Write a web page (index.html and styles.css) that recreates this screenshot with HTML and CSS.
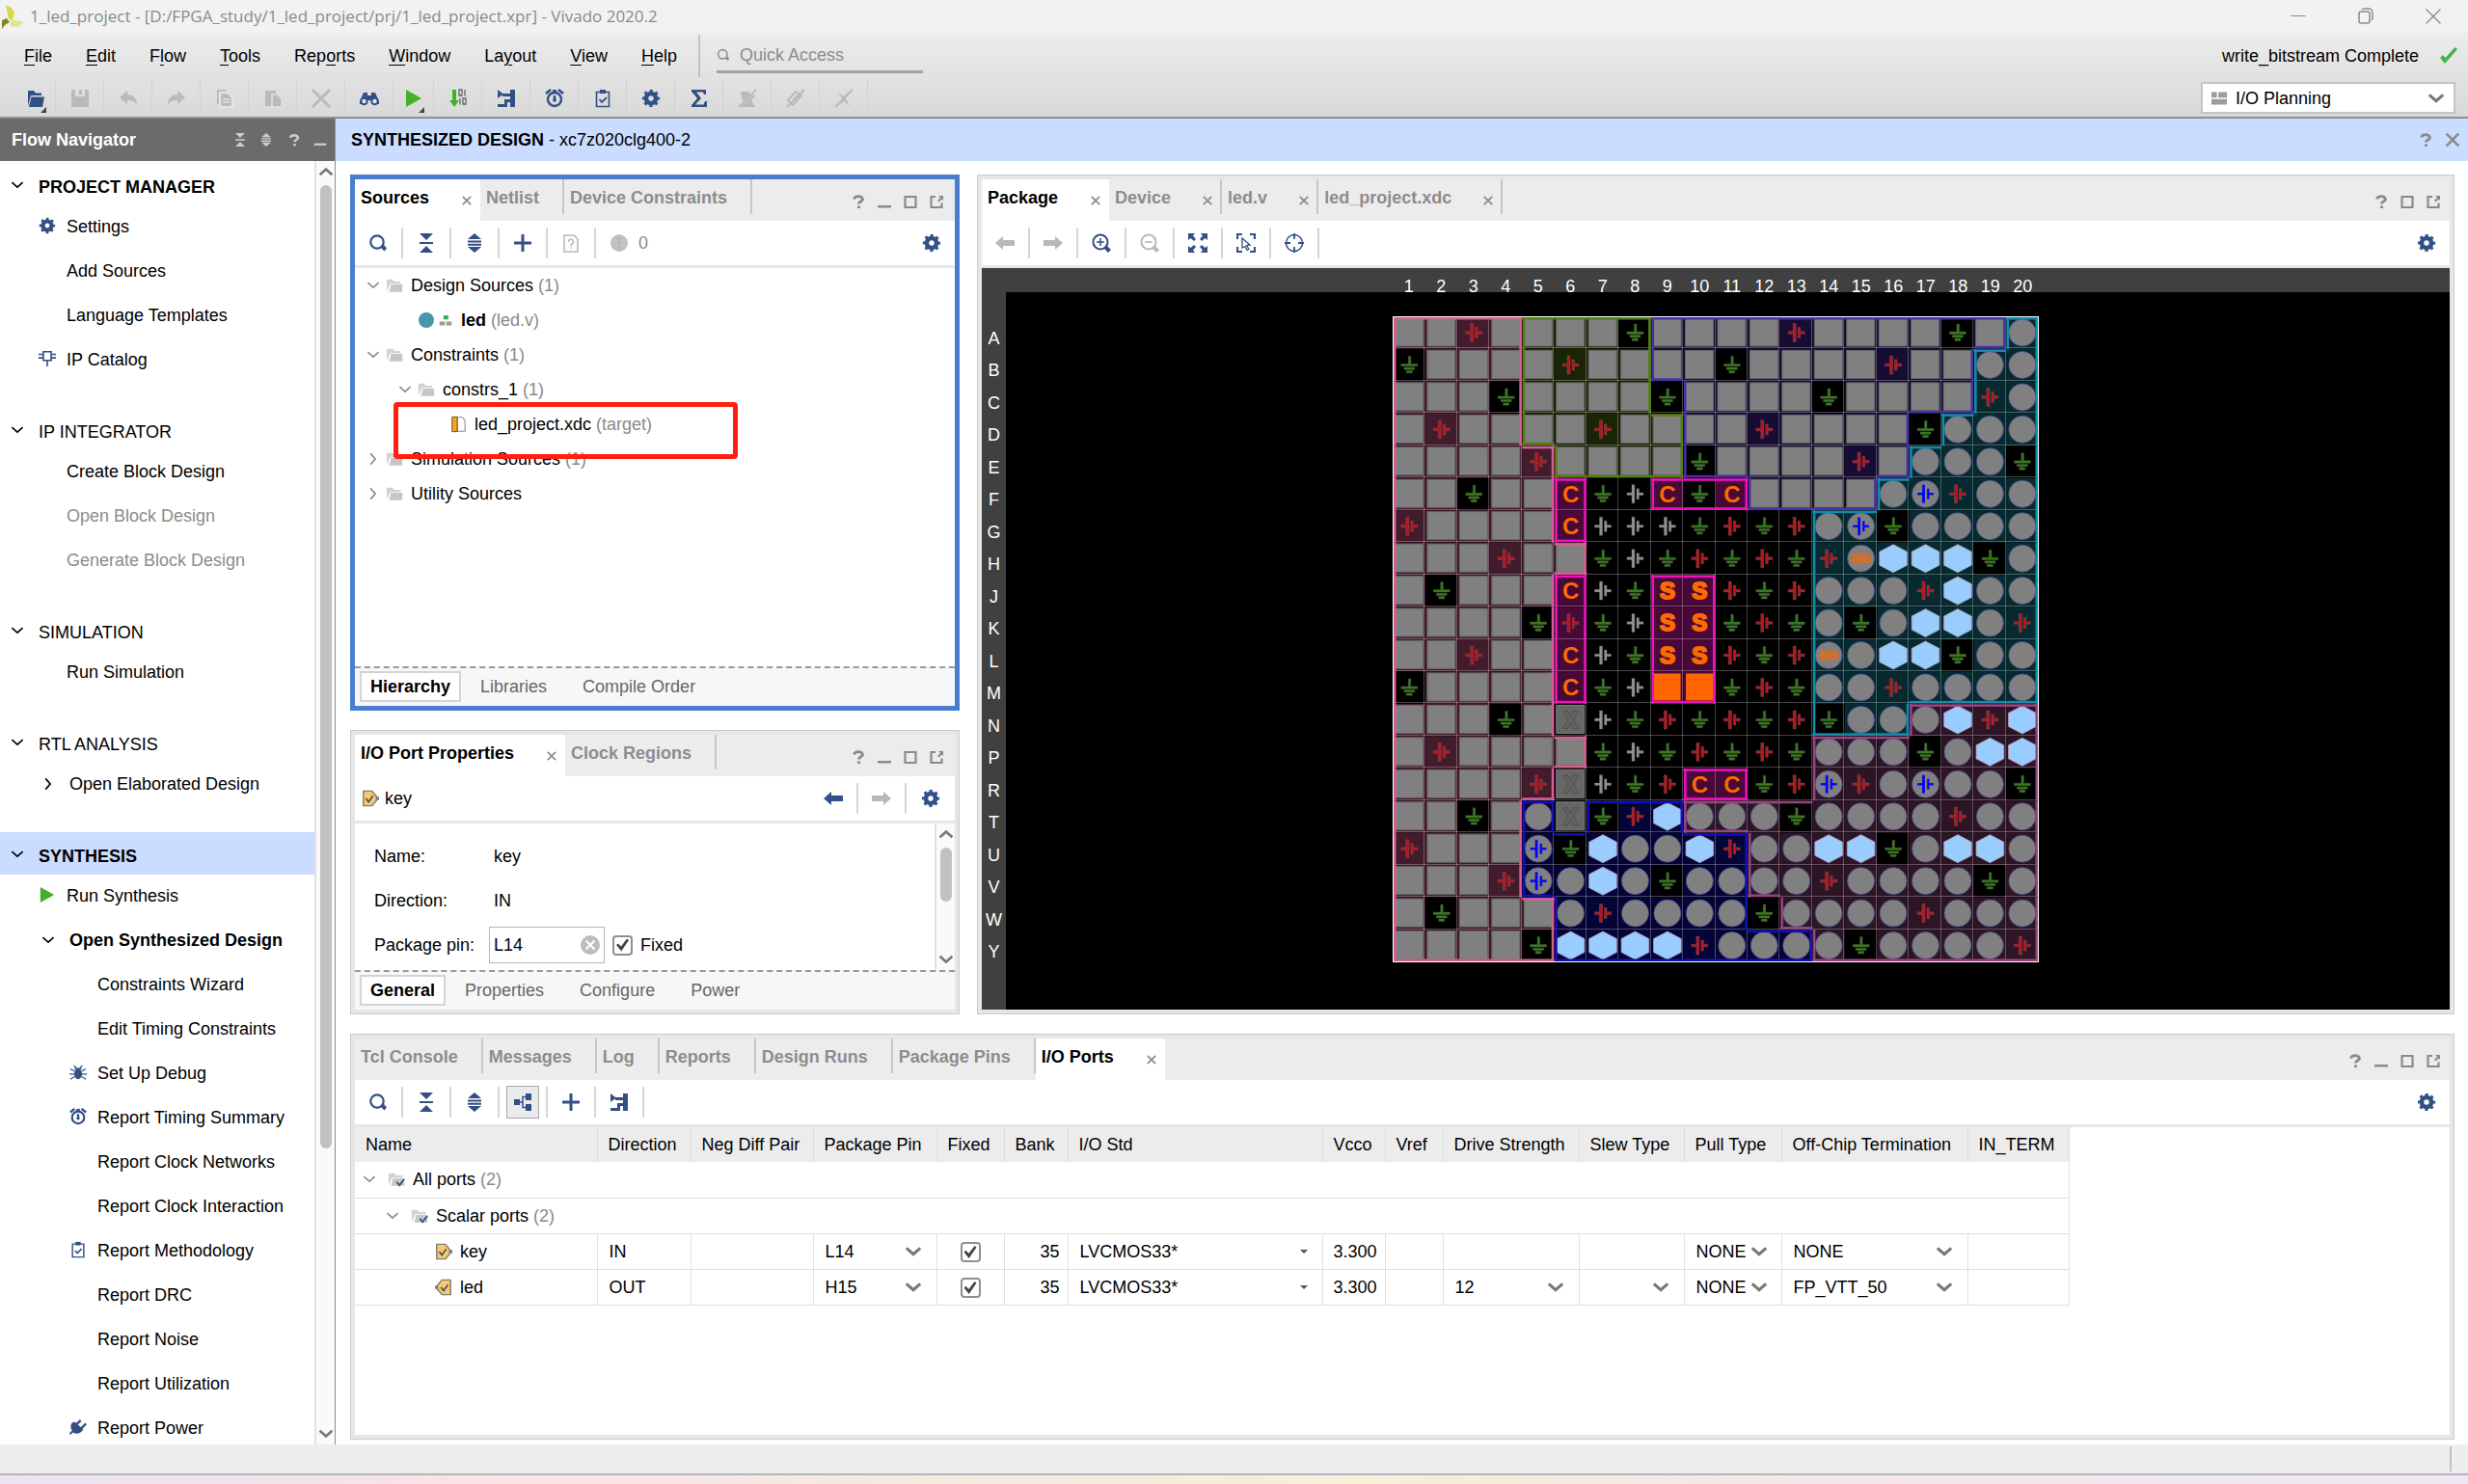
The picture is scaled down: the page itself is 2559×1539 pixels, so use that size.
FILE: index.html
```html
<!DOCTYPE html>
<html lang="en">
<head>
<meta charset="utf-8">
<title>1_led_project - Vivado 2020.2</title>
<link rel="stylesheet" href="styles.css">
</head>
<body>
<svg class="sprite" aria-hidden="true">
  <symbol id="gear" viewBox="0 0 20 20"><circle cx="10" cy="10" r="5" fill="none" stroke="currentColor" stroke-width="4.6"/><circle cx="10" cy="10" r="7.6" fill="none" stroke="currentColor" stroke-width="3" stroke-dasharray="2.98" stroke-dashoffset="1.5"/></symbol>
  <symbol id="search" viewBox="0 0 20 20"><circle cx="9" cy="9" r="6.7" fill="none" stroke="currentColor" stroke-width="2.2"/><path d="M13 15l3-3 3 3.500-2.500 3z" fill="currentColor"/></symbol>
  <symbol id="collapse" viewBox="0 0 20 20"><path d="M3 0h14l-7 7zM3 20h14l-7-7zM3 9h14v2H3z" fill="currentColor"/></symbol>
  <symbol id="expand" viewBox="0 0 20 20"><path d="M10 0l7 6H3zM10 20l7-6H3zM3 7.400h14v2H3zM3 10.800h14v2H3z" fill="currentColor"/></symbol>
  <symbol id="plus" viewBox="0 0 20 20"><path d="M8.500 1h3v7.500H19v3h-7.500V19h-3v-7.500H1v-3h7.500z" fill="currentColor"/></symbol>
  <symbol id="help" viewBox="0 0 20 20"><path d="M5.500 7.500a4.600 3.600 0 0 1 9 0c0 2.500-4.200 2.500-4.200 5" fill="none" stroke="currentColor" stroke-width="2.800"/><path d="M9 14.500h3V17H9z" fill="currentColor"/></symbol>
  <symbol id="mini" viewBox="0 0 20 20"><path d="M3 14h14v2.500H3z" fill="currentColor"/></symbol>
  <symbol id="maxi" viewBox="0 0 20 20"><path d="M4.500 5h11v11h-11z" fill="none" stroke="currentColor" stroke-width="2.200"/></symbol>
  <symbol id="float" viewBox="0 0 20 20"><path d="M9 5H4.500v11h11v-4.500" fill="none" stroke="currentColor" stroke-width="2.200"/><path d="M12 4h5v5l-1.500-1.500-3 3L11 9l3-3z" fill="currentColor"/></symbol>
  <symbol id="cross" viewBox="0 0 20 20"><path d="M3 3l14 14M17 3L3 17" fill="none" stroke="currentColor" stroke-width="2.800"/></symbol>
  <symbol id="down" viewBox="0 0 20 20"><path d="M2 6l8 7 8-7" fill="none" stroke="currentColor"/></symbol>
  <symbol id="right" viewBox="0 0 20 20"><path d="M6 2l7 8-7 8" fill="none" stroke="currentColor"/></symbol>
  <symbol id="folder" viewBox="0 0 20 20"><path d="M1 17V3h7l1.500 2.500H17V8H5z" fill="#d2d2d2"/><path d="M6 9h13v8.500H4z" fill="#c6c6c6"/></symbol>
  <symbol id="folderck" viewBox="0 0 20 20"><path d="M1 17V3h7l1.500 2.500H17V8H5z" fill="#d2d2d2"/><path d="M6 9h13v8.500H4z" fill="#c6c6c6"/><path d="M10.500 13l3 4 5.500-7" fill="none" stroke="#324f86" stroke-width="2"/></symbol>
  <symbol id="opendoc" viewBox="0 0 20 20"><path d="M2 18V2h6l2 2.500h6V7H5z" fill="currentColor"/><path d="M5.500 8.500H19L17 19H3z" fill="currentColor"/></symbol>
  <symbol id="save" viewBox="0 0 20 20"><path d="M1 1h4v7h10V1h4v18H1z" fill="currentColor"/><path d="M9 1h3v5H9z" fill="currentColor"/></symbol>
  <symbol id="undo" viewBox="0 0 20 20"><path d="M1 9l8-7v4c6 0 10 4 10 11-2-4-5-5-10-5v4z" fill="currentColor"/></symbol>
  <symbol id="redo" viewBox="0 0 20 20"><path d="M19 9l-8-7v4C5 6 1 10 1 17c2-4 5-5 10-5v4z" fill="currentColor"/></symbol>
  <symbol id="copy" viewBox="0 0 20 20"><path d="M2 1h9l2 2v13H2z" fill="currentColor"/><path d="M5 4h8l5 5v10H5z" fill="currentColor" stroke="#e4e4e4"/><path d="M8 11h7M8 14h7" stroke="#e4e4e4" stroke-width="1.500"/></symbol>
  <symbol id="paste" viewBox="0 0 20 20"><path d="M2 2h11v16H2z" fill="currentColor"/><path d="M9 6h6l4 4v9H9z" fill="currentColor" stroke="#e4e4e4" stroke-width="1.500"/></symbol>
  <symbol id="del" viewBox="0 0 20 20"><path d="M1 1l18 18M19 1L1 19" stroke="currentColor" stroke-width="3"/></symbol>
  <symbol id="binoc" viewBox="0 0 20 20"><path d="M4 4h4v3h4V4h4l4 9v3h-8v-4H8v4H0v-3z" fill="currentColor"/><circle cx="4.500" cy="13" r="3.200" fill="#e4e4e4" stroke="currentColor" stroke-width="2"/><circle cx="15.500" cy="13" r="3.200" fill="#e4e4e4" stroke="currentColor" stroke-width="2"/></symbol>
  <symbol id="play" viewBox="0 0 20 20"><path d="M2 1l16 9-16 9z" fill="#43b02a"/></symbol>
  <symbol id="bits" viewBox="0 0 20 20"><path d="M4 1h4v11h3l-5 7-5-7h3z" fill="#43b02a"/><path d="M11 1h3v6h-3zM17 1v6.500M12 10v6.500M15 10h3v6h-3z" fill="none" stroke="#666" stroke-width="1.300"/></symbol>
  <symbol id="route" viewBox="0 0 20 20"><path d="M1 1l6 4.500L1 10zM14 1h5v18h-5v-5h-3v5H1v-3h7v-5h6V8H6V5h8z" fill="currentColor"/></symbol>
  <symbol id="clock" viewBox="0 0 20 20"><circle cx="10" cy="11" r="7" fill="none" stroke="currentColor" stroke-width="2.400"/><path d="M1 5l5-4M14 1l5 4M10 7v5" stroke="currentColor" stroke-width="2.600"/><circle cx="10" cy="12" r="1.800" fill="currentColor"/><path d="M8 1h4v3H8z" fill="currentColor"/></symbol>
  <symbol id="clip" viewBox="0 0 20 20"><path d="M3.500 3.500h13v15h-13z" fill="none" stroke="currentColor" stroke-width="1.600"/><path d="M7 1h6v4H7z" fill="currentColor"/><path d="M6.500 11l2.500 3 5-5" fill="none" stroke="currentColor" stroke-width="1.800"/></symbol>
  <symbol id="sigma" viewBox="0 0 20 20"><path d="M2 1h15v5h-2l-1-2.500H7L12 10l-6 6.500h8.500L16 13h2v6H2v-2l6-7-6-7z" fill="currentColor"/></symbol>
  <symbol id="off1" viewBox="0 0 20 20"><path d="M3 3h8l2 4-6 6-3-3zM3 19l13-13 2 2-4 4 4 7z" fill="currentColor"/><path d="M1 19L19 1" stroke="currentColor" stroke-width="2"/></symbol>
  <symbol id="off2" viewBox="0 0 20 20"><path d="M2 12l8-9 6 4-9 10zM1 19L19 1M6 14l7-8" fill="none" stroke="currentColor" stroke-width="2"/></symbol>
  <symbol id="off3" viewBox="0 0 20 20"><path d="M3 2l6 6 8-6-5 8 4 8-6-5-7 5 5-8z" fill="currentColor"/><path d="M1 19L19 1" stroke="currentColor" stroke-width="2"/></symbol>
  <symbol id="ip" viewBox="0 0 20 20"><path d="M5.500 2h9v10h-9zM0 5h5M0 9h5M15 5h5M15 9h5M10 12v7" fill="none" stroke="currentColor" stroke-width="1.800"/></symbol>
  <symbol id="bug" viewBox="0 0 20 20"><path d="M6 5h8v2H6z" fill="currentColor"/><ellipse cx="10" cy="12" rx="4.500" ry="6" fill="currentColor"/><path d="M5 2l3 3M15 2l-3 3M1 6l5 3M19 6l-5 3M0 12h20M1 18l5-3M19 18l-5-3" stroke="currentColor" stroke-width="1.300"/></symbol>
  <symbol id="plug" viewBox="0 0 20 20"><path d="M3 5l3-1 9 8-1 3c-3 3-7 3-10 1L1 19l-1-2 3-3C1 11 1 8 3 5z" fill="currentColor"/><path d="M8 7l5-5M13 12l6-6M5 5l10 9" stroke="currentColor" stroke-width="2.600"/></symbol>
  <symbol id="query" viewBox="0 0 20 20"><path d="M3 2h10l4 4v13H3z" fill="none" stroke="currentColor" stroke-width="1.600"/><path d="M7.500 9a2.500 2.500 0 1 1 3.500 2c-.8.500-1 1-1 2M9.200 15h1.800" fill="none" stroke="currentColor" stroke-width="1.600"/></symbol>
  <symbol id="alert" viewBox="0 0 20 20"><circle cx="10" cy="10" r="9" fill="currentColor"/><path d="M10 4v7M10 13.500v2" stroke="#b0b0b0" stroke-width="1.800"/></symbol>
  <symbol id="hier" viewBox="0 0 20 20"><path d="M7 3h7v6H7z" fill="#2fae4e"/><path d="M1 12h8v6H1zM11 12h8v6h-8z" fill="#9b9b9b"/></symbol>
  <symbol id="xdc" viewBox="0 0 20 20"><path d="M9 2h6l3 4v12H9z" fill="#fff" stroke="#8c8c8c" stroke-width="1.200"/><path d="M3 1.500h6v17H3z" fill="#f5a623" stroke="#6b4a14" stroke-width="1"/></symbol>
  <symbol id="portin" viewBox="0 0 20 20"><path d="M2 1.500h10l5 6v5l-5 6H2z" fill="#fbc76a" stroke="#7d7d7d" stroke-width="1.600"/><path d="M17 8h3v4h-3z" fill="#7d7d7d"/><path d="M5 10l3 4 5-7" fill="none" stroke="#324f86" stroke-width="1.800"/></symbol>
  <symbol id="portout" viewBox="0 0 20 20"><path d="M18 1.500H8l-5 6v5l5 6h10z" fill="#fbc76a" stroke="#7d7d7d" stroke-width="1.600"/><path d="M0 8h3v4H0z" fill="#7d7d7d"/><path d="M7 10l3 4 5-7" fill="none" stroke="#324f86" stroke-width="1.800"/></symbol>
  <symbol id="left" viewBox="0 0 20 20"><path d="M0 10l8-7v4h12v6H8v4z" fill="currentColor"/></symbol>
  <symbol id="fwd" viewBox="0 0 20 20"><path d="M20 10l-8-7v4H0v6h12v4z" fill="currentColor"/></symbol>
  <symbol id="zin" viewBox="0 0 20 20"><circle cx="9" cy="9" r="7.500" fill="none" stroke="currentColor" stroke-width="2"/><path d="M5 9h8M9 5v8" stroke="currentColor" stroke-width="1.600"/><path d="M14.500 14.500l4 4" stroke="currentColor" stroke-width="4"/></symbol>
  <symbol id="zout" viewBox="0 0 20 20"><circle cx="9" cy="9" r="7.500" fill="none" stroke="currentColor" stroke-width="2"/><path d="M5 9h8" stroke="currentColor" stroke-width="1.600"/><path d="M14.500 14.500l4 4" stroke="currentColor" stroke-width="4"/></symbol>
  <symbol id="fit" viewBox="0 0 20 20"><path d="M0 0h7L5 2.500 8 6 6 8 2.500 5 0 7zM20 0v7l-2.500-2L14 8l-2-2 3-3.500L13 0zM0 20v-7l2.500 2L6 12l2 2-3 3.500L7 20zM20 20h-7l2-2.500L12 14l2-2 3.500 3 2.500-2z" fill="currentColor"/></symbol>
  <symbol id="sel" viewBox="0 0 20 20"><path d="M1 6V1h5M14 1h5v5M19 14v5h-5M6 19H1v-5" fill="none" stroke="currentColor" stroke-width="2.200"/><path d="M6 5l8 7-3.500.5 2.500 4-2 1-2-4L6 15z" fill="none" stroke="currentColor" stroke-width="1.300"/></symbol>
  <symbol id="target" viewBox="0 0 20 20"><circle cx="10" cy="10" r="8.500" fill="none" stroke="currentColor" stroke-width="1.500"/><path d="M10 0v6M10 14v6M0 10h6M14 10h6" stroke="currentColor" stroke-width="1.800"/></symbol>
  <symbol id="group" viewBox="0 0 20 20"><path d="M1 7h6v6H1zM13 1h6v7h-6zM13 12h6v7h-6z" fill="currentColor"/><path d="M7 10h3M13 4.500h-3v11h3" fill="none" stroke="currentColor" stroke-width="1.500"/></symbol>
  <symbol id="layout" viewBox="0 0 20 20"><path d="M0 2h7v7H0zM9 2h11v7H9zM0 11h20v7H0z" fill="#9c9c9c"/></symbol>
  <symbol id="tick" viewBox="0 0 20 20"><path d="M1 12l5 6L19 3l-2.500-2L6.500 12 4 9z" fill="#43b24a"/></symbol>
  <symbol id="restore" viewBox="0 0 20 20"><path d="M3 7a2 2 0 0 1 2-2h7a2 2 0 0 1 2 2v8a2 2 0 0 1-2 2H5a2 2 0 0 1-2-2zM6 3a3 3 0 0 1 2-1h5a4 4 0 0 1 4 4v6a3 3 0 0 1-1 2" fill="none" stroke="currentColor" stroke-width="1.500"/></symbol>
  <symbol id="thincross" viewBox="0 0 20 20"><path d="M2.500 2.500l15 15M17.500 2.500l-15 15" stroke="currentColor" stroke-width="1.300"/></symbol>
  <symbol id="line" viewBox="0 0 20 20"><path d="M2.500 9.500h15" stroke="currentColor" stroke-width="1"/></symbol>
  <symbol id="clear" viewBox="0 0 20 20"><circle cx="10" cy="10" r="10" fill="#bdbdbd"/><path d="M5.500 5.500l9 9M14.500 5.500l-9 9" stroke="#fff" stroke-width="2"/></symbol>
  <symbol id="logo" viewBox="0 0 25 26"><path d="M6 1l6 3 3 5-2 8-4-1z" fill="#d7d94a"/><path d="M2 17l5-2 3 4-5 3-3 4z" fill="#7f8a1c"/><path d="M12 16l8 2 5 1-7 5-8-1z" fill="#e2e58a"/></symbol>
</svg>

<header class="titlebar">
  <svg class="logo"><use href="#logo"/></svg>
  <span class="title">1_led_project - [D:/FPGA_study/1_led_project/prj/1_led_project.xpr] - Vivado 2020.2</span>
  <div class="wincontrols">
    <button aria-label="Minimize"><svg class="ico"><use href="#line"/></svg></button>
    <button aria-label="Restore"><svg class="ico"><use href="#restore"/></svg></button>
    <button aria-label="Close"><svg class="ico"><use href="#thincross"/></svg></button>
  </div>
</header>

<div class="topbar">
  <div class="topleft">
    <div class="menurow">
      <nav class="menu">
        <button><u>F</u>ile</button><button><u>E</u>dit</button><button>F<u>l</u>ow</button><button><u>T</u>ools</button><button>Rep<u>o</u>rts</button><button><u>W</u>indow</button><button>La<u>y</u>out</button><button><u>V</u>iew</button><button><u>H</u>elp</button>
      </nav>
      <label class="quick"><svg class="ico s14"><use href="#search"/></svg><input type="text" placeholder="Quick Access" aria-label="Quick Access"></label>
    </div>
    <div class="maintools">
      <button class="narrow drop" aria-label="Open"><svg class="ico"><use href="#opendoc"/></svg></button>
      <button class="off" aria-label="Save"><svg class="ico"><use href="#save"/></svg></button>
      <button class="off" aria-label="Undo"><svg class="ico"><use href="#undo"/></svg></button>
      <button class="off" aria-label="Redo"><svg class="ico"><use href="#redo"/></svg></button>
      <button class="off" aria-label="Copy"><svg class="ico"><use href="#copy"/></svg></button>
      <button class="off" aria-label="Paste"><svg class="ico"><use href="#paste"/></svg></button>
      <button class="off" aria-label="Delete"><svg class="ico"><use href="#del"/></svg></button>
      <button aria-label="Find"><svg class="ico"><use href="#binoc"/></svg></button>
      <button class="narrow drop" aria-label="Run"><svg class="ico"><use href="#play"/></svg></button>
      <button aria-label="Generate bitstream"><svg class="ico"><use href="#bits"/></svg></button>
      <button aria-label="Schematic"><svg class="ico"><use href="#route"/></svg></button>
      <button aria-label="Timing"><svg class="ico"><use href="#clock"/></svg></button>
      <button aria-label="Methodology"><svg class="ico"><use href="#clip"/></svg></button>
      <button aria-label="Settings"><svg class="ico"><use href="#gear"/></svg></button>
      <button aria-label="Summary"><svg class="ico"><use href="#sigma"/></svg></button>
      <button class="off" aria-label="Unmark"><svg class="ico"><use href="#off1"/></svg></button>
      <button class="off" aria-label="Unhighlight"><svg class="ico"><use href="#off2"/></svg></button>
      <button class="off" aria-label="Unselect"><svg class="ico"><use href="#off3"/></svg></button>
    </div>
  </div>
  <div class="topright">
    <div class="status">write_bitstream Complete<svg class="ico"><use href="#tick"/></svg></div>
    <label class="layoutsel"><svg class="ico s16"><use href="#layout"/></svg><select aria-label="Layout"><option>I/O Planning</option></select><svg class="ico s18 grey thick"><use href="#down"/></svg></label>
  </div>
</div>

<div class="body">
  <aside class="nav">
    <div class="navhead"><h2>Flow Navigator</h2><div class="ctl light">
      <svg class="ico s14"><use href="#collapse"/></svg><svg class="ico s14"><use href="#expand"/></svg><svg class="ico s18"><use href="#help"/></svg><svg class="ico s18"><use href="#mini"/></svg></div></div>
    <div class="navbody">
      <div class="navlist">
        <section><h3 class="bold"><svg class="ico s14"><use href="#down"/></svg>PROJECT MANAGER</h3>
          <ul><li><svg class="ico s18"><use href="#gear"/></svg><a href="#">Settings</a></li><li><a href="#">Add Sources</a></li><li><a href="#">Language Templates</a></li><li><svg class="ico s18"><use href="#ip"/></svg><a href="#">IP Catalog</a></li></ul></section>
        <section><h3><svg class="ico s14"><use href="#down"/></svg>IP INTEGRATOR</h3>
          <ul><li><a href="#">Create Block Design</a></li><li><a href="#" class="dim">Open Block Design</a></li><li><a href="#" class="dim">Generate Block Design</a></li></ul></section>
        <section><h3><svg class="ico s14"><use href="#down"/></svg>SIMULATION</h3>
          <ul><li><a href="#">Run Simulation</a></li></ul></section>
        <section><h3><svg class="ico s14"><use href="#down"/></svg>RTL ANALYSIS</h3>
          <ul><li class="sub"><svg class="ico s14"><use href="#right"/></svg><a href="#">Open Elaborated Design</a></li></ul></section>
        <section><h3 class="bold selected"><svg class="ico s14"><use href="#down"/></svg>SYNTHESIS</h3>
          <ul><li><svg class="ico s18"><use href="#play"/></svg><a href="#">Run Synthesis</a></li>
            <li class="sub bold"><svg class="ico s14"><use href="#down"/></svg><a href="#">Open Synthesized Design</a></li>
            <li class="deep"><a href="#">Constraints Wizard</a></li>
            <li class="deep"><a href="#">Edit Timing Constraints</a></li>
            <li class="deep"><svg class="ico s18"><use href="#bug"/></svg><a href="#">Set Up Debug</a></li>
            <li class="deep"><svg class="ico s18"><use href="#clock"/></svg><a href="#">Report Timing Summary</a></li>
            <li class="deep"><a href="#">Report Clock Networks</a></li>
            <li class="deep"><a href="#">Report Clock Interaction</a></li>
            <li class="deep"><svg class="ico s18"><use href="#clip"/></svg><a href="#">Report Methodology</a></li>
            <li class="deep"><a href="#">Report DRC</a></li>
            <li class="deep"><a href="#">Report Noise</a></li>
            <li class="deep"><a href="#">Report Utilization</a></li>
            <li class="deep"><svg class="ico s18"><use href="#plug"/></svg><a href="#">Report Power</a></li></ul></section>
      </div>
      <div class="scroll"><svg class="ico s16 up thick"><use href="#down"/></svg><div class="track"><div class="thumb long"></div></div><svg class="ico s16 thick"><use href="#down"/></svg></div>
    </div>
  </aside>

  <main class="main">
    <div class="mainhead"><h1>SYNTHESIZED DESIGN <span>- xc7z020clg400-2</span></h1><div class="ctl"><svg class="ico s20"><use href="#help"/></svg><svg class="ico s18"><use href="#cross"/></svg></div></div>
    <div class="work">
      <section class="panel active sources">
        <div class="tabs">
          <button class="tab on">Sources<svg class="ico x"><use href="#cross"/></svg></button><button class="tab">Netlist</button><button class="tab">Device Constraints</button>
          <div class="ctl"><svg class="ico s20"><use href="#help"/></svg><svg class="ico s20"><use href="#mini"/></svg><svg class="ico s20"><use href="#maxi"/></svg><svg class="ico s20"><use href="#float"/></svg></div>
        </div>
        <div class="tools">
          <button aria-label="Search"><svg class="ico"><use href="#search"/></svg></button><button aria-label="Collapse all"><svg class="ico"><use href="#collapse"/></svg></button><button aria-label="Expand all"><svg class="ico"><use href="#expand"/></svg></button><button aria-label="Add"><svg class="ico"><use href="#plus"/></svg></button><button class="off" aria-label="Info"><svg class="ico"><use href="#query"/></svg></button><span class="count"><svg class="ico"><use href="#alert"/></svg>0</span>
          <button class="last" aria-label="Settings"><svg class="ico"><use href="#gear"/></svg></button>
        </div>
        <div class="tree">
          <div class="node"><svg class="ico s14"><use href="#down"/></svg><svg class="ico s18"><use href="#folder"/></svg><span>Design Sources <i>(1)</i></span></div>
          <div class="node leaf1"><span class="dot"></span><svg class="ico s14"><use href="#hier"/></svg><span><b>led</b> <i>(led.v)</i></span></div>
          <div class="node"><svg class="ico s14"><use href="#down"/></svg><svg class="ico s18"><use href="#folder"/></svg><span>Constraints <i>(1)</i></span></div>
          <div class="node in1"><svg class="ico s14"><use href="#down"/></svg><svg class="ico s18"><use href="#folder"/></svg><span>constrs_1 <i>(1)</i></span></div>
          <div class="node leaf2"><svg class="ico s18"><use href="#xdc"/></svg><span>led_project.xdc <i>(target)</i></span></div>
          <div class="node"><svg class="ico s14"><use href="#right"/></svg><svg class="ico s18"><use href="#folder"/></svg><span>Simulation Sources <i>(1)</i></span></div>
          <div class="node"><svg class="ico s14"><use href="#right"/></svg><svg class="ico s18"><use href="#folder"/></svg><span>Utility Sources</span></div>
          <div class="marker"></div>
        </div>
        <div class="views"><button class="on">Hierarchy</button><button>Libraries</button><button>Compile Order</button></div>
      </section>

      <section class="panel props">
        <div class="tabs">
          <button class="tab on">I/O Port Properties<svg class="ico x"><use href="#cross"/></svg></button><button class="tab">Clock Regions</button>
          <div class="ctl"><svg class="ico s20"><use href="#help"/></svg><svg class="ico s20"><use href="#mini"/></svg><svg class="ico s20"><use href="#maxi"/></svg><svg class="ico s20"><use href="#float"/></svg></div>
        </div>
        <div class="tools">
          <span class="port"><svg class="ico s18"><use href="#portin"/></svg>key</span>
          <button class="push" aria-label="Back"><svg class="ico"><use href="#left"/></svg></button><button class="off" aria-label="Forward"><svg class="ico"><use href="#fwd"/></svg></button><button class="end" aria-label="Settings"><svg class="ico"><use href="#gear"/></svg></button>
        </div>
        <div class="formwrap">
          <div class="form">
            <span>Name:</span><span class="val">key</span>
            <span>Direction:</span><span class="val">IN</span>
            <label for="pin">Package pin:</label>
            <div class="pinrow"><span class="pinbox"><input id="pin" type="text" value="L14"><svg class="ico"><use href="#clear"/></svg></span><label class="fixed"><input type="checkbox" class="cb" checked>Fixed</label></div>
          </div>
          <div class="scroll"><svg class="ico s16 up thick"><use href="#down"/></svg><div class="track"><div class="thumb short"></div></div><svg class="ico s16 thick"><use href="#down"/></svg></div>
        </div>
        <div class="views"><button class="on">General</button><button>Properties</button><button>Configure</button><button>Power</button></div>
      </section>

      <section class="panel package">
        <div class="tabs">
          <button class="tab on">Package<svg class="ico x"><use href="#cross"/></svg></button><button class="tab closable">Device<svg class="ico x"><use href="#cross"/></svg></button><button class="tab closable">led.v<svg class="ico x"><use href="#cross"/></svg></button><button class="tab closable">led_project.xdc<svg class="ico x"><use href="#cross"/></svg></button>
          <div class="ctl"><svg class="ico s20"><use href="#help"/></svg><svg class="ico s20"><use href="#maxi"/></svg><svg class="ico s20"><use href="#float"/></svg></div>
        </div>
        <div class="tools">
          <button class="off" aria-label="Back"><svg class="ico"><use href="#left"/></svg></button><button class="off" aria-label="Forward"><svg class="ico"><use href="#fwd"/></svg></button><button aria-label="Zoom in"><svg class="ico"><use href="#zin"/></svg></button><button class="off" aria-label="Zoom out"><svg class="ico"><use href="#zout"/></svg></button><button aria-label="Zoom fit"><svg class="ico"><use href="#fit"/></svg></button><button aria-label="Zoom selection"><svg class="ico"><use href="#sel"/></svg></button><button aria-label="Auto fit"><svg class="ico"><use href="#target"/></svg></button>
          <button class="last" aria-label="Settings"><svg class="ico"><use href="#gear"/></svg></button>
        </div>
        <div class="pkgview">
          <div class="cols" id="cols"></div>
          <div class="pkgrow"><div class="rows" id="rows"></div><div class="canvas"><svg id="pins" class="pins" viewBox="0 0 670 670"></svg></div></div>
        </div>
      </section>

      <section class="panel ports">
        <div class="tabs">
          <button class="tab">Tcl Console</button><button class="tab">Messages</button><button class="tab">Log</button><button class="tab">Reports</button><button class="tab">Design Runs</button><button class="tab">Package Pins</button><button class="tab on">I/O Ports<svg class="ico x"><use href="#cross"/></svg></button>
          <div class="ctl"><svg class="ico s20"><use href="#help"/></svg><svg class="ico s20"><use href="#mini"/></svg><svg class="ico s20"><use href="#maxi"/></svg><svg class="ico s20"><use href="#float"/></svg></div>
        </div>
        <div class="tools">
          <button aria-label="Search"><svg class="ico"><use href="#search"/></svg></button><button aria-label="Collapse all"><svg class="ico"><use href="#collapse"/></svg></button><button aria-label="Expand all"><svg class="ico"><use href="#expand"/></svg></button><button class="pressed" aria-label="Group by interface"><span><svg class="ico"><use href="#group"/></svg></span></button><button aria-label="Add"><svg class="ico"><use href="#plus"/></svg></button><button aria-label="Schematic"><svg class="ico"><use href="#route"/></svg></button>
          <button class="last" aria-label="Settings"><svg class="ico"><use href="#gear"/></svg></button>
        </div>
        <table>
          <colgroup><col class="w251"><col class="w97"><col class="w127"><col class="w128"><col class="w70"><col class="w66"><col class="w264"><col class="w65"><col class="w60"><col class="w141"><col class="w109"><col class="w101"><col class="w193"><col class="w105"></colgroup>
          <thead><tr><th>Name</th><th>Direction</th><th>Neg Diff Pair</th><th>Package Pin</th><th>Fixed</th><th>Bank</th><th>I/O Std</th><th>Vcco</th><th>Vref</th><th>Drive Strength</th><th>Slew Type</th><th>Pull Type</th><th>Off-Chip Termination</th><th>IN_TERM</th></tr></thead>
          <tbody>
            <tr class="grp"><td colspan="14"><div class="node"><svg class="ico s14"><use href="#down"/></svg><svg class="ico s18"><use href="#folderck"/></svg><span>All ports <i>(2)</i></span></div></td></tr>
            <tr class="grp"><td colspan="14"><div class="node in2"><svg class="ico s14"><use href="#down"/></svg><svg class="ico s18"><use href="#folderck"/></svg><span>Scalar ports <i>(2)</i></span></div></td></tr>
            <tr><td><div class="node in3"><svg class="ico s18"><use href="#portin"/></svg><span>key</span></div></td><td>IN</td><td></td>
              <td><div class="dd"><select aria-label="Package pin of key"><option>L14</option></select><svg class="ico s18 thick"><use href="#down"/></svg></div></td>
              <td class="mid"><input type="checkbox" class="cb" checked aria-label="key fixed"></td><td class="num">35</td>
              <td><div class="dd small"><select aria-label="I/O standard of key"><option>LVCMOS33*</option></select><span class="caret"></span></div></td>
              <td class="num">3.300</td><td></td><td></td><td></td>
              <td><div class="dd tight"><select aria-label="Pull type of key"><option>NONE</option></select><svg class="ico s18 thick"><use href="#down"/></svg></div></td>
              <td><div class="dd"><select aria-label="Termination of key"><option>NONE</option></select><svg class="ico s18 thick"><use href="#down"/></svg></div></td><td></td></tr>
            <tr><td><div class="node in3"><svg class="ico s18"><use href="#portout"/></svg><span>led</span></div></td><td>OUT</td><td></td>
              <td><div class="dd"><select aria-label="Package pin of led"><option>H15</option></select><svg class="ico s18 thick"><use href="#down"/></svg></div></td>
              <td class="mid"><input type="checkbox" class="cb" checked aria-label="led fixed"></td><td class="num">35</td>
              <td><div class="dd small"><select aria-label="I/O standard of led"><option>LVCMOS33*</option></select><span class="caret"></span></div></td>
              <td class="num">3.300</td><td></td>
              <td><div class="dd"><select aria-label="Drive strength of led"><option>12</option></select><svg class="ico s18 thick"><use href="#down"/></svg></div></td>
              <td><div class="dd"><select aria-label="Slew type of led"><option></option></select><svg class="ico s18 thick"><use href="#down"/></svg></div></td>
              <td><div class="dd tight"><select aria-label="Pull type of led"><option>NONE</option></select><svg class="ico s18 thick"><use href="#down"/></svg></div></td>
              <td><div class="dd"><select aria-label="Termination of led"><option>FP_VTT_50</option></select><svg class="ico s18 thick"><use href="#down"/></svg></div></td><td></td></tr>
          </tbody>
        </table>
      </section>
    </div>
  </main>
</div>
<footer class="statusbar"><span class="grip"></span></footer>
<div class="desktop"></div>
<script src="package.js"></script>
</body>
</html>
```
FILE: styles.css
```css
* { box-sizing: border-box; }
body { margin: 0; height: 100vh; display: flex; flex-direction: column; background: #fff; color: #000; font: 18px/22px "Liberation Sans", Arial, sans-serif; overflow: hidden; }
button, input, select { font: inherit; color: inherit; background: none; border: 0; padding: 0; margin: 0; appearance: none; border-radius: 0; outline: 0; }
h1, h2, h3, ul { margin: 0; padding: 0; font: inherit; list-style: none; }
a { color: inherit; text-decoration: none; }
i { font-style: normal; color: #8a8a8a; }
.sprite { position: absolute; width: 0; height: 0; }
.ico { width: 20px; height: 20px; flex: none; display: block; stroke-width: 2.4; }
.s14 { width: 14px; height: 14px; }
.s16 { width: 16px; height: 16px; }
.s18 { width: 18px; height: 18px; }
.thick { stroke-width: 3.4; }
.grey { color: #777; }
.bold { font-weight: bold; }

.titlebar { flex: none; height: 34px; background: #f2f2f2; display: flex; align-items: center; color: #8a8a8a; }
.logo { width: 25px; height: 26px; flex: none; }
.title { margin-left: 6px; font: 17px/24px "Open Sans", "Noto Sans", sans-serif; }
.wincontrols { margin-left: auto; display: flex; padding-right: 10px; }
.wincontrols button { width: 52px; margin-left: 18px; display: flex; justify-content: center; }

.topbar { flex: none; height: 89px; display: flex; justify-content: space-between; background: linear-gradient(#ececec, #d9d9d9); border-bottom: 2px solid #8f8f8f; }
.menurow { display: flex; height: 48px; align-items: center; }
.menu { display: flex; gap: 35px; padding: 0 22px 0 25px; border-right: 2px solid #c2c2c2; height: 44px; align-items: center; }
.menu u { text-underline-offset: 3px; }
.quick { margin-left: 17px; width: 214px; display: flex; align-items: center; gap: 10px; border-bottom: 3px solid #a2a2a2; height: 36px; color: #8c8c8c; }
.quick input { width: 150px; }
.quick input::placeholder { color: #8c8c8c; opacity: 1; }
.maintools { display: flex; padding-left: 16px; }
.maintools button { width: 50px; height: 39px; display: flex; align-items: center; justify-content: center; border-right: 1px solid #d2d2d2; color: #324f86; position: relative; }
.maintools .narrow { width: 42px; }
.maintools .off { color: #bababa; }
.drop::after { content: ""; position: absolute; right: 9px; bottom: 4px; border-left: 6px solid transparent; border-bottom: 6px solid #444; }
.topright { display: flex; flex-direction: column; align-items: flex-end; padding-right: 10px; }
.status { display: flex; align-items: center; gap: 21px; height: 48px; }
.layoutsel { width: 264px; height: 33px; margin: 3px 3px 0 0; border: 2px solid #c4c4c4; background: #fff; display: flex; align-items: center; padding: 0 9px; }
.layoutsel select { flex: 1; margin-left: 9px; }

.body { flex: 1; min-height: 0; display: flex; }
.nav { flex: none; width: 348px; border-right: 1px solid #8c8c8c; display: flex; flex-direction: column; }
.navhead { height: 44px; flex: none; background: #6b6b6b; color: #fff; display: flex; align-items: center; justify-content: space-between; padding: 0 6px 0 12px; }
.navhead h2 { font-weight: bold; }
.ctl { display: flex; align-items: center; gap: 9px; color: #8a8a8a; }
.ctl.light { color: #cdcdcd; }
.ctl.light .s14 { margin-right: 4px; }
.navbody { flex: 1; min-height: 0; display: flex; }
.navlist { flex: 1; padding-top: 2px; overflow: hidden; white-space: nowrap; }
.navlist section { margin-bottom: 32px; }
.navlist h3 { height: 44px; display: flex; align-items: center; padding: 5px 0 0 11px; gap: 15px; }
.navlist h3 svg { margin-bottom: 4px; }
.navlist h3.bold { font-weight: bold; }
.selected { background: #cadcff; }
.navlist ul { display: flex; flex-direction: column; gap: 6px; }
.navlist li { height: 40px; display: flex; align-items: center; padding: 4px 0 0 40px; gap: 11px; color: #324f86; }
.navlist li .s18 { margin-bottom: 3px; }
.navlist li a { color: #000; }
.navlist li a.dim { color: #8c8c8c; }
.navlist li a:first-child { margin-left: 29px; }
.navlist li.sub { padding-left: 43px; gap: 15px; color: #000; }
.navlist li.deep { padding-left: 72px; }
.scroll { flex: none; width: 21px; background: #fafafa; border-left: 2px solid #e2e2e2; display: flex; flex-direction: column; align-items: center; padding: 3px 0; color: #777; }
.up { transform: rotate(180deg); }
.track { flex: 1; width: 100%; display: flex; justify-content: center; padding: 6px 0; }
.thumb { width: 12px; border-radius: 6px; background: #c1c1c1; }
.thumb.long { height: 78%; }
.thumb.short { height: 55%; }

.main { flex: 1; min-width: 0; display: flex; flex-direction: column; }
.mainhead { height: 44px; flex: none; background: #cadcff; display: flex; align-items: center; justify-content: space-between; padding: 0 7px 0 16px; }
.mainhead h1 { font-weight: bold; }
.mainhead h1 span { font-weight: normal; }
.work { flex: 1; min-height: 0; display: grid; grid-template-columns: minmax(0, 632fr) minmax(0, 1532fr); grid-template-rows: minmax(0, 556fr) minmax(0, 295fr) minmax(0, 421fr); gap: 20px 18px; padding: 14px 14px 5px 15px; }
.panel { border: 1px solid #cacaca; box-shadow: inset 0 0 0 4px #e6e6e6; padding: 4px; display: flex; flex-direction: column; min-width: 0; min-height: 0; background: #fff; }
.panel.active { border: 5px solid #4a7dcf; padding: 0; box-shadow: none; }
.package { grid-column: 2; grid-row: 1 / 3; }
.ports { grid-column: 1 / 3; }
.tabs { flex: none; height: 43px; background: #ececec; display: flex; align-items: flex-start; padding-right: 9px; white-space: nowrap; }
.package .tabs, .ports .tabs { padding-right: 7px; }
.tab { height: 36px; padding: 2px 24px 0 6px; font-weight: bold; color: #8c8c8c; border-right: 2px solid #c6c6c6; display: flex; align-items: center; }
.tab.on { height: 43px; background: #fff; color: #000; padding: 0 8px 5px 6px; border: 0; }
.tab.closable { padding-right: 7px; }
.x { width: 12px; height: 12px; margin: 5px 0 0 33px; color: #8a8a8a; }
.closable .x { margin-left: 32px; }
.tabs .ctl { margin-left: auto; gap: 7px; height: 46px; }
.tools { flex: none; height: 49px; border-bottom: 3px solid #e6e6e6; display: flex; align-items: center; }
.tools button { width: 50px; height: 32px; display: flex; align-items: center; justify-content: center; border-right: 2px solid #d6d6d6; color: #324f86; }
.tools .off { color: #b8b8b8; }
.tools .last { margin-left: auto; border: 0; width: 48px; }
.tools .push { margin-left: auto; }
.tools .end { border: 0; }
.pressed span { width: 34px; height: 34px; flex: none; border: 1px solid #a8a8a8; background: #ebebeb; display: flex; align-items: center; justify-content: center; }
.count { display: flex; align-items: center; gap: 10px; color: #8a8a8a; padding-left: 14px; }
.count svg { color: #c2c2c2; }
.port { display: flex; align-items: center; gap: 6px; padding-left: 7px; }

.tree { flex: 1; min-height: 0; position: relative; overflow: hidden; }
.node { height: 36px; display: flex; align-items: center; padding-left: 12px; white-space: nowrap; }
.node > .s14 { color: #8c8c8c; }
.node > .s18 { margin: 0 8px 0 6px; }
.node.in1 { padding-left: 45px; }
.node.leaf1 { padding-left: 66px; gap: 5px; }
.node.leaf1 b { margin-left: 4px; }
.node.leaf2 { padding-left: 92px; }
.dot { width: 16px; height: 16px; border-radius: 50%; background: #4995ac; }
.marker { position: absolute; left: 40px; top: 139px; width: 357px; height: 59px; border: 5px solid #ff1e10; border-radius: 4px; }
.views { flex: none; height: 41px; background: #f7f7f7; border-top: 2px dashed #999; display: flex; align-items: center; gap: 3px; padding: 0 0 2px 5px; color: #666; }
.views button { height: 32px; padding: 0 17px; }
.views .on { border: 2px solid #d4d4d4; background: #fff; color: #000; font-weight: bold; padding: 0 9px; }

.formwrap { flex: 1; min-height: 0; display: flex; overflow: hidden; }
.form { flex: 1; display: grid; grid-template-columns: 119px 1fr; grid-auto-rows: 46px; align-items: center; padding: 11px 0 0 20px; align-content: start; }
.val { padding-left: 5px; }
.pinrow { display: flex; align-items: center; gap: 8px; }
.pinbox { width: 120px; height: 38px; border: 1px solid #b5b5b5; display: flex; align-items: center; padding: 0 4px; }
.pinbox input { flex: 1; width: 50px; }
.fixed { display: flex; align-items: center; gap: 8px; }
.cb { width: 21px; height: 21px; border: 2px solid #8f8f8f; border-radius: 4px; background: #fff; display: inline-grid; place-items: center; vertical-align: middle; }
.cb::before { content: ""; width: 13px; height: 13px; background: #444; clip-path: polygon(0 50%, 15% 38%, 38% 62%, 85% 0, 100% 12%, 40% 100%); }

.pkgview { flex: 1; min-height: 0; background: #404040; color: #fff; display: flex; flex-direction: column; overflow: hidden; }
.cols { flex: none; width: 670px; height: 25px; margin: 0 auto; display: grid; grid-template-columns: repeat(20, 1fr); text-align: center; padding-top: 8px; line-height: 22px; }
.pkgrow { flex: 1; min-height: 0; display: flex; }
.rows { flex: none; width: 25px; height: 701px; padding-top: 31px; display: grid; grid-template-rows: repeat(20, 1fr); align-items: center; text-align: center; }
.canvas { flex: 1; background: #000; display: flex; justify-content: center; align-items: flex-start; padding: 25px 25px 0 0; z-index: 1; }
.pins { width: 670px; height: 670px; flex: none; }
.pins text { font-weight: bold; font-size: 24px; text-anchor: middle; fill: #ff6a00; }

table { border-collapse: collapse; table-layout: fixed; width: 1777px; flex: none; }
th { height: 36px; background: #ececec; border-right: 1px solid #dcdcdc; font-weight: normal; text-align: left; padding: 0 0 0 11px; white-space: nowrap; }
td { height: 37px; padding: 0 0 0 12px; border-right: 1px solid #e0e0e0; border-bottom: 1px solid #dedede; white-space: nowrap; }
td:has(.node) { padding: 0; }
td .node { height: 36px; padding-left: 8px; }
td .node.in2 { padding-left: 32px; }
td .node.in3 { padding-left: 77px; }
td .s18 { flex: none; }
td .node > .s14 { margin-right: 6px; }
td.num { text-align: right; padding: 0 8px 0 0; }
td.mid { text-align: center; padding: 0; }
.dd { display: flex; align-items: center; justify-content: space-between; color: #000; padding-right: 15px; }
.dd svg { color: #777; }
.dd.tight { padding-right: 14px; }
.dd select { flex: 1; min-width: 0; }
.caret { border: 4px solid transparent; border-top-color: #555; border-bottom: 0; }
.w251 { width: 251px; } .w97 { width: 97px; } .w127 { width: 127px; } .w128 { width: 128px; } .w70 { width: 70px; } .w66 { width: 66px; } .w264 { width: 264px; }
.w65 { width: 65px; } .w60 { width: 60px; } .w141 { width: 141px; } .w109 { width: 109px; } .w101 { width: 101px; } .w193 { width: 193px; } .w105 { width: 105px; }

.statusbar { flex: none; height: 32px; background: #eee; border-bottom: 2px solid #b4b4b8; display: flex; justify-content: flex-end; padding: 2px 17px 2px 0; }
.grip { border-right: 2px solid #c2c2c2; }
.desktop { flex: none; height: 9px; background: linear-gradient(90deg, #ece3f3, #f8e4e4 20%, #f5ece0 45%, #f6efd9 55%, #f4e6ea 75%, #eee6f2); }
```
FILE: package.js
```js
// Pin kinds: q user I/O square, c user I/O circle, h assigned pin, p power, w internal power,
// b regulator, g ground, C/S config pins, O JTAG block, o port placed, x unconnected
const kinds = [
  "qqpqqqqgqqqqpqqqqgqc", "gqqqqpqqqqgqqqqpqqcc", "qqqgqqqqgqqqqgqqqqpc", "qpqqqqpqqqqpqqqqgccc",
  "qqqqpqqqqgqqqqpqcccg", "qqgqqCgwCgCqqqqcbpcc", "pqqqqCwwwgpgpcbgcccc", "qqqpqqgwgpgpgpohhhgc",
  "qgqqqCwgSSpgpcccphcc", "qqqqgpgwSSgpgcgchhcp", "qqpqqCwgSSpgpochhgcc", "gqqqqCgwOOgpgccpcccc",
  "qqqgqxwgpgpgpgccchph", "qpqqqqgwgpgpgcccgchh", "qqqqpxwgpCCgpbpcbccg", "qqgqcxgphcccgccccpcc",
  "pqqqbghcchpcchhgchhc", "qqqpbchcgccccpccccgc", "qgqqqcpccccgccccpccc", "qqqqghhhhpccccgccccp"
];
// I/O bank of each pin
const banks = [
  "aaaannnnvvvvvvvvvvvt", "aaaannnnvvvvvvvvvvtt", "aaaannnn.vvvvvvvvvtt", "aaaannnnnvvvvvvv.ttt",
  "aaaaannnnvvvvvvvtttt", "aaaaak..kkkvvvvttttt", "aaaaak.......ttttttt", "aaaaaa.......ttttttt",
  "aaaaak..kk...ttttttt", "aaaaak..kk...ttttttt", "aaaaak..kk...ttttttt", "aaaaak..kk...ttttttt",
  "aaaaa........tttmmmm", "aaaaaa.......mmmmmmm", "aaaaa....kk..mmmmmmm", "aaaad.dddmmmmmmmmmmm",
  "aaaadddddddmmmmmmmmm", "aaaadddddddmmmmmmmmm", "aaaaadddddd.mmmmmmmm", "aaaaaddddddddmmmmmmm"
];
const fill = { a: "#421b2c", n: "#1a2406", v: "#170d33", t: "#062a30", m: "#2d1526", d: "#040436", k: "#480838", ".": "#000" };
const edge = { a: "#d65f96", n: "#55800f", v: "#4a30a8", t: "#128fa8", m: "#9a4580", d: "#1212b4", k: "#f010c0" };
const P = 33.45;

const power = (x, y, c) => `<path d="M${x - 8.5} ${y - 1.3}h5v-8.2h3v19h-3v-8.200h-5zM${x + 1.5} ${y - 5.5}h2.500v4.200h4.500v2.600h-4.500v4.200h-2.500z" fill="${c}" stroke="#777" stroke-opacity=".4" stroke-width=".8"/>`;
const ground = (x, y) => `<path d="M${x - 1} ${y - 9}h2.500v8h-2.500zM${x - 8.5} ${y - 1}h17v2.400h-17zM${x - 5.5} ${y + 2.6}h11v2.300h-11zM${x - 3} ${y + 6}h6v2.400h-6z" fill="#348012" stroke="#555" stroke-opacity=".5" stroke-width=".8"/>`;
const circle = (x, y) => `<circle cx="${x}" cy="${y}" r="14" fill="#808080" stroke="#4a4a90" stroke-width=".8"/>`;

function pin(kind, x, y) {
  const cx = x + 16.8, cy = y + 16.5;
  switch (kind) {
    case "q": return `<rect x="${x + 2}" y="${y + 1.5}" width="29" height="29" fill="#808080" stroke="#666" stroke-width="1"/>`;
    case "c": return circle(cx, cy);
    case "h": return `<path d="M${cx} ${cy - 14.5}l14.300 7.500v14l-14.300 7.500l-14.300-7.500v-14z" fill="#99ccff" stroke="#b9a0c0" stroke-width=".8"/>`;
    case "p": return power(cx, cy, "#b8141e");
    case "w": return power(cx, cy, "#909090");
    case "b": return circle(cx, cy) + power(cx, cy, "#0000ff");
    case "g": return ground(cx, cy);
    case "C": return `<text x="${cx}" y="${cy + 8.5}">C</text>`;
    case "S": return `<text x="${cx}" y="${cy + 8}" stroke="#ff6a00" stroke-width="2">S</text>`;
    case "O": return `<rect x="${x + 2.5}" y="${y + 2}" width="28" height="28" fill="#ff6600"/>`;
    case "o": return circle(cx, cy) + `<rect x="${cx - 10}" y="${cy - 5}" width="20" height="10" fill="#cc7033"/>`;
    case "x": return `<rect x="${x + 2}" y="${y + 1.5}" width="29" height="29" fill="#666" stroke="#808080"/><path d="M${cx - 8} ${cy - 9}h5l3 6 3-6h5l-5.500 9 5.500 9h-5l-3-6-3 6h-5l5.500-9z" fill="#646464" stroke="#505050" stroke-width="1"/>`;
  }
  return "";
}

let back = "", marks = "", edges = "", lines = "";
for (let r = 0; r < 20; r++) {
  for (let c = 0; c < 20; c++) {
    const b = banks[r][c], k = kinds[r][c], x = c * P + 0.5, y = r * P + 0.5;
    back += `<rect x="${x}" y="${y}" width="${P}" height="${P}" fill="${k === "g" ? "#000" : fill[b]}"/>`;
    marks += pin(k, x, y);
    if (b === ".") continue;
    const other = (rr, cc) => (banks[rr] || "")[cc] !== b;
    const s = `fill="${edge[b]}"`;
    if (other(r - 1, c)) edges += `<rect x="${x}" y="${y + 0.5}" width="${P}" height="2.500" ${s}/>`;
    if (other(r + 1, c)) edges += `<rect x="${x}" y="${y + P - 3}" width="${P}" height="2.500" ${s}/>`;
    if (other(r, c - 1)) edges += `<rect x="${x + 0.5}" y="${y}" width="2.500" height="${P}" ${s}/>`;
    if (other(r, c + 1)) edges += `<rect x="${x + P - 3}" y="${y}" width="2.500" height="${P}" ${s}/>`;
  }
}
for (let i = 1; i < 20; i++) {
  const p = Math.round(i * P) - 0.5;
  lines += `<path d="M${p} 1V669M1 ${p}H669" stroke="#fff" stroke-opacity=".27"/>`;
}
document.getElementById("pins").innerHTML = back + lines + marks + edges +
  `<rect x=".5" y=".5" width="669" height="669" fill="none" stroke="#fff"/>`;
document.getElementById("cols").innerHTML = Array.from({ length: 20 }, (_, i) => `<span>${i + 1}</span>`).join("");
document.getElementById("rows").innerHTML = [..."ABCDEFGHJKLMNPRTUVWY"].map(l => `<span>${l}</span>`).join("");
```
